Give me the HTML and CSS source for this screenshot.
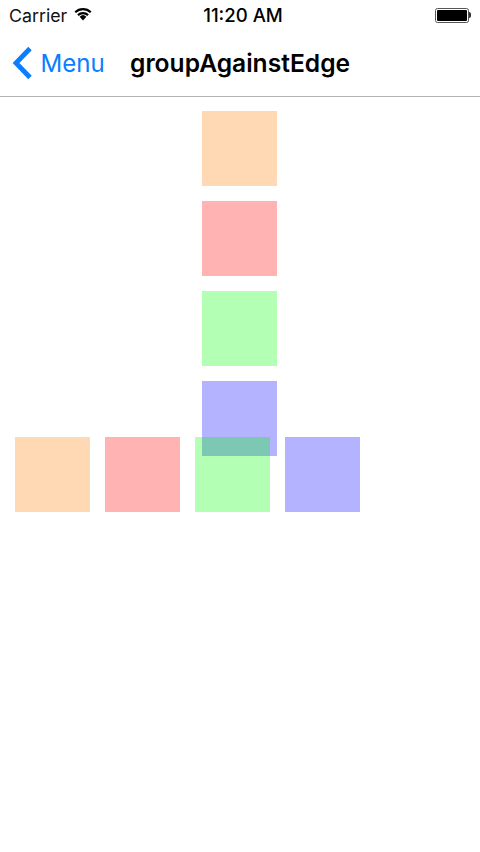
FILE: index.html
```html
<!DOCTYPE html>
<html lang="en">
<head>
    <meta charset="UTF-8">
    <title>groupAgainstEdge</title>
    <link rel="stylesheet" href="styles.css">
</head>
<body>
    <div class="status-bar">
        <div class="status-left">
            <span class="carrier">Carrier</span>
            <svg class="wifi" width="20" height="15" viewBox="0 0 20 15">
                <path d="M10 14.5 L6.6 10.7 A5 5 0 0 1 13.4 10.7 Z"/>
                <path d="M4.2 8.3 A8.4 8.4 0 0 1 15.8 8.3 L14.3 9.9 A6.2 6.2 0 0 0 5.7 9.9 Z"/>
                <path d="M1.5 5.4 A12.2 12.2 0 0 1 18.5 5.4 L17 7 A10 10 0 0 0 3 7 Z"/>
            </svg>
        </div>
        <span class="clock">11:20 AM</span>
        <div class="battery">
            <div class="battery-body"><div class="battery-fill"></div></div>
            <div class="battery-nub"></div>
        </div>
    </div>
    <div class="nav-bar">
        <div class="back">
            <svg class="chevron" width="20" height="34" viewBox="0 0 20 34">
                <path d="M18 2.5 L4 17 L18 31.5" fill="none" stroke="#0a7eff" stroke-width="4.8"/>
            </svg>
            <span class="back-label">Menu</span>
        </div>
        <span class="nav-title">groupAgainstEdge</span>
    </div>
    <div class="canvas">
        <div class="group group-column">
            <div class="box orange"></div>
            <div class="box red"></div>
            <div class="box green"></div>
            <div class="box blue"></div>
        </div>
        <div class="group group-row">
            <div class="box orange"></div>
            <div class="box red"></div>
            <div class="box green"><div class="overlap"></div></div>
            <div class="box blue"></div>
        </div>
    </div>
</body>
</html>
```

FILE: styles.css
```css
*{
    margin: 0;
    padding: 0;
    box-sizing: border-box;
}
html,body{
    width: 480px;
    height: 852px;
    overflow: hidden;
}
body{
    background: #ffffff;
    color: #000000;
    font-family: Inter, "Liberation Sans", sans-serif;
}
.status-bar{
    height: 30px;
    padding: 0 9px;
    display: flex;
    align-items: center;
    justify-content: space-between;
    position: relative;
}
.status-left{
    display: flex;
    align-items: center;
    gap: 6px;
}
.carrier{
    font-size: 17.8px;
    color: #111111;
}
.wifi{
    fill: #000000;
    margin-top: -4px;
}
.clock{
    width: 100%;
    position: absolute;
    left: 0;
    top: 5px;
    padding-left: 6px;
    text-align: center;
    font-size: 18.6px;
    font-weight: 500;
    line-height: 21px;
}
.battery{
    display: flex;
    align-items: center;
}
.battery-body{
    width: 34px;
    height: 15px;
    padding: 1px;
    border: 1px solid #555555;
    border-radius: 2.5px;
}
.battery-fill{
    height: 100%;
    background: #000000;
    border-radius: 1px;
}
.battery-nub{
    width: 2px;
    height: 6px;
    background: #333333;
    border-radius: 0 2px 2px 0;
}
.nav-bar{
    height: 67px;
    padding-left: 12px;
    display: flex;
    align-items: center;
    border-bottom: 1px solid #b2b2b2;
}
.back{
    display: flex;
    align-items: center;
    gap: 8.5px;
    width: 118px;
}
.back-label{
    font-size: 24.1px;
    color: #0a7eff;
}
.nav-title{
    font-size: 24.6px;
    font-weight: 600;
    white-space: nowrap;
}
.canvas{
    height: 755px;
    position: relative;
}
.group{
    display: flex;
    gap: 15px;
    position: absolute;
}
.group-column{
    flex-direction: column;
    left: 202px;
    top: 14px;
}
.group-row{
    left: 15px;
    top: 340px;
}
.box{
    width: 75px;
    height: 75px;
    position: relative;
}
.orange{
    background: #ffd9b3;
}
.red{
    background: #ffb3b3;
}
.green{
    background: #b3ffb3;
}
.blue{
    background: #b3b3ff;
}
.overlap{
    width: 68px;
    height: 19px;
    position: absolute;
    left: 7px;
    top: 0;
    background: #7dc8b3;
}
```
